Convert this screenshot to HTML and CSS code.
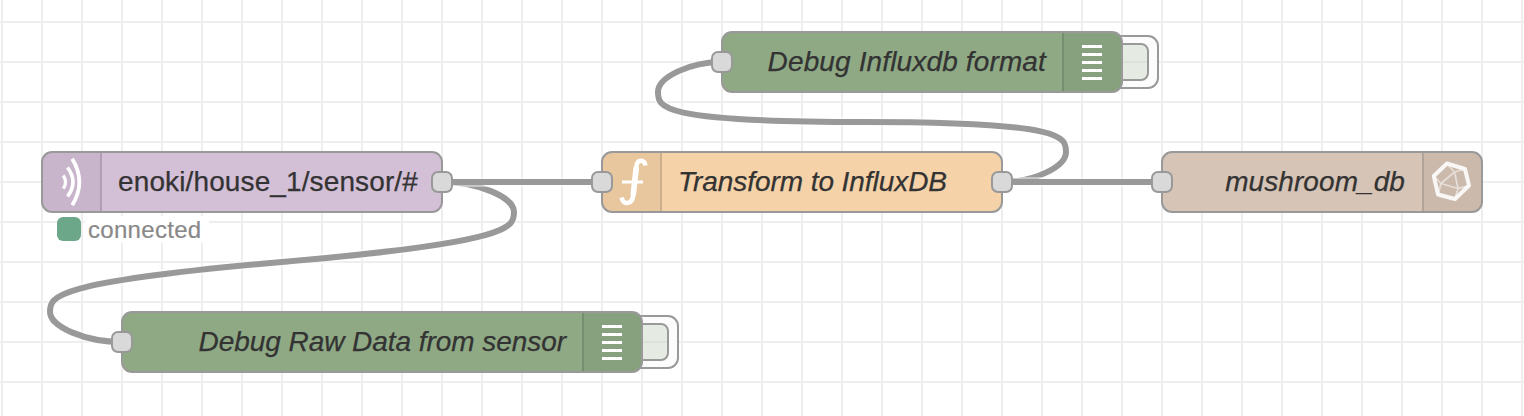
FILE: index.html
```html
<!DOCTYPE html>
<html lang="en">
<head>
<meta charset="utf-8">
<title>Flow</title>
<link rel="stylesheet" href="styles.css">
</head>
<body>
<main class="workspace">
  <svg class="wires" width="1524" height="416" viewBox="0 0 1524 416">
    <g class="wire"><path class="outline" d="M442 182C478 182 514 197 514 212S514 242 282 262S50 297 50 312S86 342 122 342"/><path class="line" d="M442 182C478 182 514 197 514 212S514 242 282 262S50 297 50 312S86 342 122 342"/></g>
    <g class="wire"><path class="outline" d="M1002 182C1034 182 1066 167 1066 152S1066 122 862 122S658 107 658 92S690 62 722 62"/><path class="line" d="M1002 182C1034 182 1066 167 1066 152S1066 122 862 122S658 107 658 92S690 62 722 62"/></g>
    <g class="wire"><path class="outline" d="M442 182H602M1002 182H1162"/><path class="line" d="M442 182H602M1002 182H1162"/></g>
  </svg>

  <section class="node mqtt">
    <span class="icon left"><svg width="60" height="60" viewBox="0 0 60 60"><g fill="none" stroke="#fff"><path stroke-width="3.200" d="M21.200 23.500Q26 30 21.200 36.500"/><path stroke-width="3.600" d="M25.500 15.500Q36.500 30 25.500 44.500"/><path stroke-width="3.800" d="M30.200 6.700Q44.500 30 30.200 53.300"/></g></svg></span>
    <span class="label">enoki/house_1/sensor/#</span>
    <i class="port out"></i>
    <span class="status"><i class="dot"></i><span class="status-text">connected</span></span>
  </section>

  <section class="node function">
    <span class="icon left"><svg width="60" height="60" viewBox="0 0 60 60"><path fill="none" stroke="#fff" stroke-width="4.600" d="M43.400 13.500C43 7.300 35 6.500 34.300 15L31.200 43C30.400 53 21 53.500 19.600 45.500"/><path fill="none" stroke="#fff" stroke-width="5.600" d="M34.300 15L31.200 43"/><path stroke="#fff" stroke-width="3" d="M20 30H41"/></svg></span>
    <span class="label">Transform to InfluxDB</span>
    <i class="port in"></i><i class="port out"></i>
  </section>

  <section class="node debug format">
    <i class="button"><i class="key"></i></i>
    <span class="body"><span class="label">Debug Influxdb format</span>
    <span class="icon right"><svg width="60" height="60" viewBox="0 0 60 60"><path stroke="#fff" stroke-width="3" d="M20 14.500H40M20 22.500H40M20 30.500H40M20 38.500H40M20 46.500H40"/></svg></span></span>
    <i class="port in"></i>
  </section>

  <section class="node debug raw">
    <i class="button"><i class="key"></i></i>
    <span class="body"><span class="label">Debug Raw Data from sensor</span>
    <span class="icon right"><svg width="60" height="60" viewBox="0 0 60 60"><path stroke="#fff" stroke-width="3" d="M20 14.500H40M20 22.500H40M20 30.500H40M20 38.500H40M20 46.500H40"/></svg></span></span>
    <i class="port in"></i>
  </section>

  <section class="node influx">
    <span class="label">mushroom_db</span>
    <span class="icon right"><svg width="60" height="60" viewBox="0 0 60 60"><g fill="none" stroke="#fff" stroke-linejoin="round"><path stroke-width="4" opacity=".88" d="M25 11.500L43 17L47 33.500L33 47L16 42.500L11.800 24Z"/><path stroke-width="1.800" opacity=".5" d="M25 12L32.500 20L43 17M32.500 20L36 36.500L33 47M36 36.500L47 34M36 36.500L19 31.500L32.500 20M19 31.500L11.800 24M19 31.500L16 42.500"/></g></svg></span>
    <i class="port in"></i>
  </section>
</main>
</body>
</html>
```
FILE: styles.css
```css
* { box-sizing: border-box; }
body { margin: 0; }
.workspace {
  position: relative;
  width: 1524px;
  height: 416px;
  overflow: hidden;
  background-color: #fff;
  background-image:
    linear-gradient(to right, #eee 2px, transparent 2px),
    linear-gradient(to bottom, #eee 2px, transparent 2px);
  background-size: 40px 40px;
  background-position: 1px 0, 0 21px;
  font-family: "Liberation Sans", Arial, sans-serif;
  font-size: 28px;
  color: #333;
}
.wires { position: absolute; inset: 0; }
.wire path { fill: none; }
.wire .outline { stroke: #fff; stroke-width: 10px; opacity: .45; }
.wire .line { stroke: #999; stroke-width: 6px; }

.node {
  position: absolute;
  display: flex;
  height: 62px;
  border: 2px solid #999;
  border-radius: 11px;
}
.mqtt { left: 41px; top: 151px; width: 402px; background: #d3bfd6; }
.function { left: 601px; top: 151px; width: 402px; background: #f5d2a8; }
.influx { left: 1161px; top: 151px; width: 322px; background: #d6c4b6; }
.format { left: 721px; top: 31px; width: 402px; }
.raw { left: 121px; top: 311px; width: 522px; }
.debug { border: 0; }
.body {
  position: relative;
  display: flex;
  flex: 1;
  border: 2px solid #999;
  border-radius: 11px;
  background: #8fa985;
}
.icon { flex: none; width: 59px; height: 58px; background: rgba(0, 0, 0, .05); }
.icon svg { display: block; margin-top: -1px; }
.icon.left { border-right: 2px solid rgba(0, 0, 0, .12); border-radius: 9px 0 0 9px; }
.icon.left svg { margin-left: -1px; }
.icon.right { border-left: 2px solid rgba(0, 0, 0, .12); border-radius: 0 9px 9px 0; }
.icon.right svg { margin-left: -2px; }
.label { flex: 1; line-height: 58px; white-space: nowrap; -webkit-text-stroke: .25px #333; }
.mqtt .label { padding-left: 16px; letter-spacing: .12px; }
.function .label { padding-left: 16px; font-style: italic; letter-spacing: -.06px; }
.debug .label, .influx .label { padding-right: 17px; text-align: right; font-style: italic; letter-spacing: .08px; }
.format .label { padding-right: 16px; letter-spacing: .14px; }
.raw .label { padding-right: 16px; letter-spacing: -.05px; }

.port {
  position: absolute;
  top: 18px;
  width: 22px;
  height: 22px;
  border: 2px solid #999;
  border-radius: 7px;
  background: #d9d9d9;
}
.port.in { left: -12px; }
.port.out { right: -12px; }
.debug .port { top: 20px; left: -10px; }

.button {
  position: absolute;
  right: -36px;
  top: 4px;
  width: 64px;
  height: 54px;
  border: 2px solid #999;
  border-radius: 11px;
  background: #fcfcfc;
}
.key {
  position: absolute;
  right: 8px;
  top: 6px;
  width: 34px;
  height: 38px;
  border: 2px solid #999;
  border-radius: 8px;
  background: linear-gradient(#e5ebe3 16px, #dbe0d9 16px, #dbe0d9 18px, #e5ebe3 18px);
}
.status {
  position: absolute;
  left: 12px;
  top: 62px;
  display: flex;
  align-items: center;
  gap: 4px;
  height: 28px;
  padding: 0 8px 0 2px;
}
.dot { width: 24px; height: 24px; border-radius: 6px; background: #6ca78a; }
.status-text {
  padding: 1px 8px 0 3px;
  background: #fff;
  color: #888;
  font-size: 24px;
  line-height: 26px;
  letter-spacing: .3px;
  -webkit-text-stroke: .2px #888;
}
```
